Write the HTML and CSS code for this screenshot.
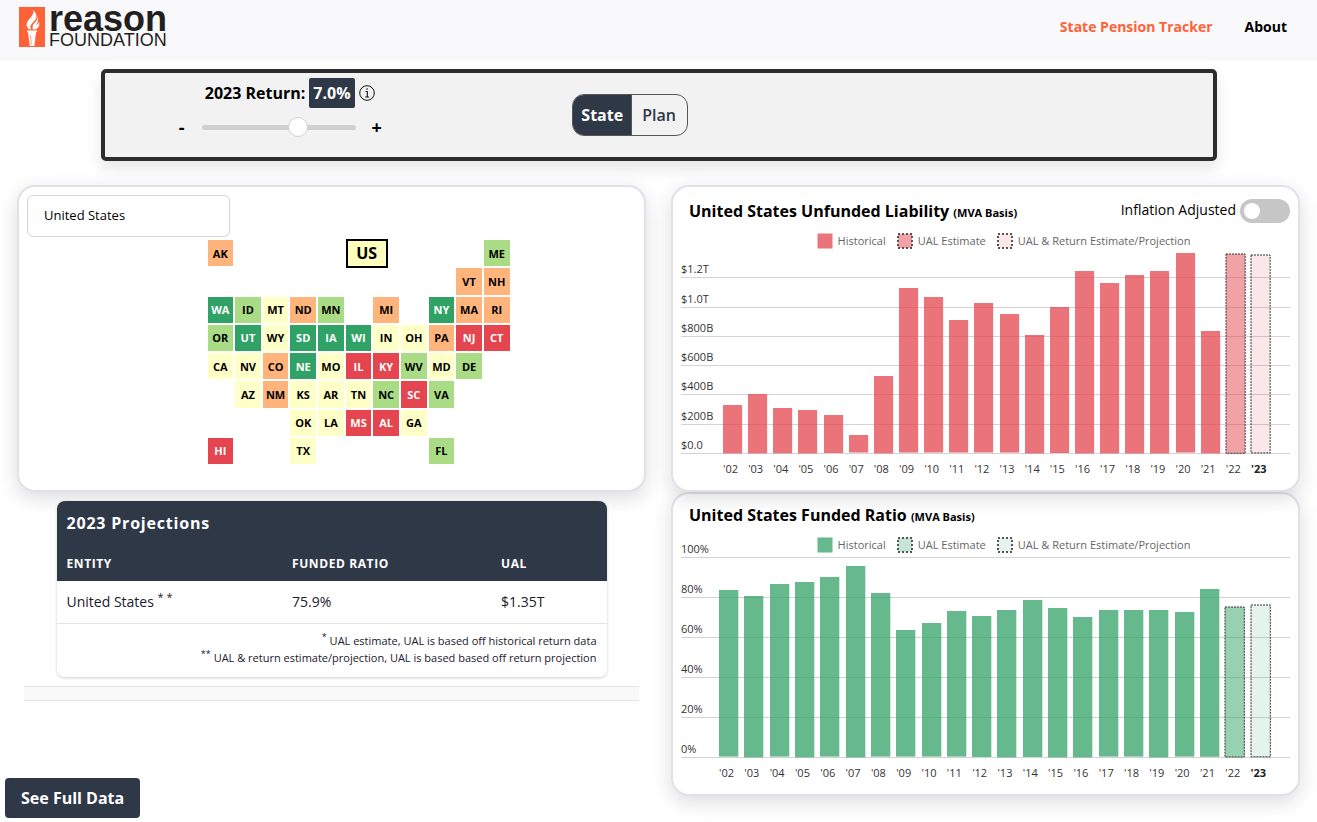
FILE: index.html
```html
<!DOCTYPE html>
<html lang="en">
<head>
<meta charset="utf-8">
<title>State Pension Tracker</title>
<link rel="stylesheet" href="styles.css">
</head>
<body>
<header class="site-header">
  <a class="logo" href="#" aria-label="Reason Foundation">
    <svg class="logo-mark" viewBox="0 0 26 40" aria-hidden="true">
      <rect width="26" height="40" fill="#ff6237"/>
      <path fill="#fff" d="M14 3c1.500 3-1.500 6.500-4 9.500-2.800 3.300-3.600 7 .2 9.800l2 .2c-1.300-1.600-1-3.600.4-5.400l3.900-4.600c2-2.500.8-6.700-2.500-9.500zM18.700 8.500c.7 3.200-1.300 5.500-3.200 7.500-1.900 2.100-2.500 4.400-1.500 6.500h2.200c3.300-1.200 4.900-4.300 3.800-7.600-.8 1.600-1.800 2.600-2.900 3.400 1.700-3 2.700-6.600 1.600-9.800z"/>
      <path fill="#fff" d="M8 23.500h10v1.800h-1L15.400 39h-4.600L9 25.300H8z"/>
      <path stroke="#ff6237" stroke-width=".6" d="M11.500 28l.8 10"/>
    </svg>
    <span class="logo-text"><span class="logo-name">reason</span><span class="logo-sub">FOUNDATION</span></span>
  </a>
  <nav class="site-nav">
    <a class="nav-link active" href="#">State Pension Tracker</a>
    <a class="nav-link" href="#">About</a>
  </nav>
</header>

<section class="controls">
  <div class="return-control">
    <div class="return-title">
      <label for="return">2023 Return:</label>
      <output class="return-value" for="return">7.0%</output>
      <svg class="info" viewBox="0 0 16 16" fill="none" stroke="#111" aria-hidden="true">
        <circle cx="8" cy="8" r="7.300"/>
        <path d="M6.500 6.500H8.300V12M6.300 12h3.800" stroke-width="1.100"/>
        <circle cx="8" cy="4" r=".8" fill="#111" stroke="none"/>
      </svg>
    </div>
    <div class="slider-row">
      <button class="step" type="button">-</button>
      <input class="slider" id="return" type="range" min="0" max="100" value="64">
      <button class="step" type="button">+</button>
    </div>
  </div>
  <div class="view-cell">
    <div class="view-toggle">
      <button class="view selected" type="button">State</button>
      <button class="view" type="button">Plan</button>
    </div>
  </div>
</section>

<main class="dashboard">
  <div class="column">
    <section class="card map-card">
      <select class="entity" aria-label="Entity"><option>United States</option></select>
      <div class="map-wrap"><div class="map" id="map"></div></div>
    </section>
    <div class="projections">
      <table class="table">
        <thead>
          <tr><th class="table-title" colspan="3">2023 Projections</th></tr>
          <tr class="heads"><th class="col-entity">Entity</th><th class="col-ratio">Funded Ratio</th><th>UAL</th></tr>
        </thead>
        <tbody>
          <tr><td>United States <sup>* *</sup></td><td>75.9%</td><td>$1.35T</td></tr>
        </tbody>
        <tfoot>
          <tr><td class="notes" colspan="3">
            <p><sup>*</sup> UAL estimate, UAL is based off historical return data</p>
            <p><sup>**</sup> UAL &amp; return estimate/projection, UAL is based based off return projection</p>
          </td></tr>
        </tfoot>
      </table>
    </div>
    <div class="divider"></div>
  </div>

  <div class="column">
    <section class="card chart-card liability">
      <div class="chart-head">
        <h2 class="chart-title">United States Unfunded Liability <small>(MVA Basis)</small></h2>
        <label class="switch-label"><span class="switch-text">Inflation Adjusted</span> <input class="switch" type="checkbox"></label>
      </div>
      <div class="chart" id="liability"></div>
    </section>
    <section class="card chart-card ratio">
      <div class="chart-head">
        <h2 class="chart-title">United States Funded Ratio <small>(MVA Basis)</small></h2>
      </div>
      <div class="chart" id="ratio"></div>
    </section>
  </div>
</main>

<button class="full-data" type="button">See Full Data</button>
<script src="app.js"></script>
</body>
</html>
```
FILE: styles.css
```css
* { box-sizing: border-box; }

body {
  margin: 0;
  background: #fff;
  color: #000;
  font-family: "Open Sans", "Noto Sans", sans-serif;
  font-size: 14px;
}

button, select { font: inherit; color: inherit; }

.site-header {
  display: flex;
  justify-content: space-between;
  align-items: flex-start;
  height: 61px;
  padding: 7px 30px 0 19px;
  background: #f9f9fb;
}

.logo { display: flex; gap: 4px; color: #231f20; text-decoration: none; }
.logo-mark { width: 26px; height: 40px; }
.logo-text { display: flex; flex-direction: column; font-family: "Liberation Sans", Arial, sans-serif; }
.logo-name { font-size: 36px; font-weight: 700; line-height: 23px; }
.logo-sub { font-size: 18px; line-height: 20px; }

.site-nav { display: flex; gap: 32px; padding-top: 10px; }
.nav-link { color: #000; font-weight: 700; line-height: 20px; text-decoration: none; }
.nav-link.active { color: #ff6237; }

.controls {
  display: grid;
  grid-template-columns: repeat(3, 1fr);
  height: 92px;
  margin: 8px 100px 24px 101px;
  border: 4px solid #2d2d2d;
  border-radius: 5px;
  background: #f2f2f2;
  box-shadow: 0 8px 16px rgba(0, 0, 0, .1);
}

.return-control { display: flex; flex-direction: column; align-items: center; padding-top: 5px; }
.return-title { display: flex; align-items: center; gap: 4px; font-size: 16px; font-weight: 700; }
.return-value { padding: 0 4px; border-radius: 2px; background: #2f3847; color: #fff; line-height: 30px; }
.info { width: 16px; height: 16px; }

.slider-row { display: flex; align-items: center; gap: 9px; padding: 4px 21px 0 0; }
.step { width: 23px; padding: 0; border: 0; background: none; font-size: 18px; font-weight: 700; line-height: 30px; }

.slider { -webkit-appearance: none; appearance: none; width: 154px; height: 20px; margin: 0; background: none; }
.slider::-webkit-slider-runnable-track { height: 5px; border-radius: 3px; background: #cfd0d2; }
.slider::-webkit-slider-thumb {
  -webkit-appearance: none;
  width: 20px;
  height: 20px;
  margin-top: -8px;
  border: 1px solid #d2d2d6;
  border-radius: 50%;
  background: #fff;
}

.view-cell { display: flex; align-items: center; padding-left: 98px; }
.view-toggle { display: flex; height: 42px; overflow: hidden; border: 1px solid #555; border-radius: 12px; }
.view { padding: 0 11px 0 10px; border: 0; background: none; color: #2f3847; font-size: 16px; font-weight: 600; }
.view.selected { padding: 0 8px; border-right: 1px solid #555; background: #2f3847; color: #fff; font-weight: 700; }

.dashboard {
  display: grid;
  grid-template-columns: minmax(0, 1fr) minmax(0, 1fr);
  gap: 25px;
  padding: 0 17px 26px;
}

.card {
  border: 2px solid #e1e1e9;
  border-radius: 18px;
  background: #fff;
  box-shadow: 0 6px 20px rgba(0, 0, 0, .14);
}

.map-card { padding: 8px 8px 26px; }
.entity {
  -webkit-appearance: none;
  appearance: none;
  display: block;
  width: 203px;
  height: 42px;
  padding: 0 16px 2px;
  border: 1px solid #d4d4d6;
  border-radius: 6px;
  background: #fff;
  font-size: 13px;
}
.map-wrap { display: flex; justify-content: center; padding: 3px 0 0 54px; }
.map {
  display: grid;
  grid-template-columns: repeat(11, minmax(0, 1fr));
  grid-template-rows: repeat(8, minmax(0, 1fr));
  gap: 2px;
  width: 302px;
  height: 224px;
}
.state { display: flex; align-items: center; justify-content: center; font-size: 11px; font-weight: 700; }
.state.dark-green { background: #31a266; color: #fff; }
.state.green { background: #a9dc84; }
.state.yellow { background: #ffffc8; }
.state.orange { background: #ffb47c; }
.state.red { background: #e4454f; color: #fff; }
.state.nation {
  align-self: center;
  width: 42px;
  height: 29px;
  border: 2px solid #000;
  background: #ffffbe;
  font-size: 16px;
}

.projections {
  position: relative;
  max-width: 550px;
  margin: 9px auto;
  overflow: hidden;
  border-radius: 8px;
  box-shadow: 0 1px 3px rgba(0, 0, 0, .2);
}
.table { width: 100%; border-collapse: collapse; background: #fff; color: #1a202c; }
.table th, .table td { padding: 0 10px; text-align: left; }
.table thead { background: #2f3847; color: #fff; }
.table .table-title { height: 44px; font-size: 16px; letter-spacing: .05em; }
.heads th { height: 36px; font-size: 12px; letter-spacing: .05em; text-transform: uppercase; }
.col-entity { width: 41%; }
.col-ratio { width: 38%; }
.table tbody td { height: 42px; border-bottom: 1px solid #e2e2e8; }
.table sup { font-size: 11px; line-height: 0; }
.table .notes { padding: 8px 10px 11px; font-size: 11px; line-height: 17px; text-align: right; }
.notes p { margin: 0; }
.table .notes sup { font-size: 9px; }
.divider { height: 15px; margin: 0 7px; border: solid #e4e4e6; border-width: 1px 0; background: #f9f9f9; }

.liability { position: relative; z-index: 1; }
.chart-card { padding: 12px 8px 13px; }
.chart-card.ratio { padding-top: 9px; }
.chart-head { display: flex; align-items: center; justify-content: space-between; height: 24px; padding-left: 8px; }
.chart-title { margin: 0; padding-top: 2px; font-size: 16px; line-height: 24px; }
.chart-title small { font-size: 11px; }
.switch-label { display: flex; align-items: center; gap: 4px; line-height: 20px; }
.switch-text { padding-bottom: 3px; }
.switch { -webkit-appearance: none; appearance: none; width: 50px; height: 24px; margin: 0; padding: 4px; border-radius: 12px; background: #c6c6c6; }
.switch::before { content: ""; display: block; width: 16px; height: 16px; border-radius: 50%; background: #fff; }

.legend { display: flex; justify-content: center; gap: 11px; margin: 10px 0 4px; padding-left: 36px; color: #666; font-size: 11px; line-height: 16px; }
.legend-item { display: flex; align-items: center; gap: 5px; }
.swatch { width: 16px; height: 16px; }
.swatch rect { stroke: #555; stroke-width: 2px; stroke-dasharray: 2 2; }
.swatch .historical { stroke: none; }

.plot { position: relative; height: 200px; }
.grid-line {
  position: absolute;
  left: 0;
  right: 0;
  margin-bottom: -1px;
  border-bottom: 1px solid #d3d3d3;
  color: #333;
  font-size: 11px;
  line-height: 16px;
}
.bars, .years { display: flex; gap: 6px; padding: 0 20px 0 38px; }
.liability .bars, .liability .years { padding-left: 42px; }
.bars { position: relative; align-items: flex-end; height: 200px; }
.bar { flex: 1 1 0; width: 0; overflow: visible; }
.years { margin-top: 8px; color: #333; font-size: 11px; line-height: 16px; }
.year { flex: 1 1 0; min-width: 0; }
.year:last-child { color: #222; font-weight: 700; }

.red-series { fill: #e4454f; }
.green-series { fill: #31a266; }
.historical { fill-opacity: .75; }
.estimate { fill-opacity: .5; }
.projection { fill-opacity: .13; }
.swatch .green-series.estimate { fill-opacity: .28; }
.bar .estimate, .bar .projection { stroke: #333; stroke-width: 1px; stroke-dasharray: 2 1; }

.full-data {
  position: fixed;
  left: 5px;
  bottom: 4px;
  height: 40px;
  padding: 0 16px;
  border: 0;
  border-radius: 4px;
  background: #2f3847;
  color: #fff;
  font-size: 16px;
  font-weight: 700;
}
```
FILE: app.js
```js
const groups = {
  'dark-green': 'WA:3,1 UT:4,2 SD:4,4 IA:4,5 WI:4,6 NE:5,4 NY:3,9',
  green: 'ME:1,11 ID:3,2 MN:3,5 OR:4,1 WV:5,8 DE:5,10 NC:6,7 VA:6,9 FL:8,9',
  yellow: 'MT:3,3 WY:4,3 IN:4,7 OH:4,8 CA:5,1 NV:5,2 MO:5,5 MD:5,9 AZ:6,2 KS:6,4 AR:6,5 TN:6,6 OK:7,4 LA:7,5 GA:7,8 TX:8,4',
  orange: 'AK:1,1 VT:2,10 NH:2,11 ND:3,4 MI:3,7 MA:3,10 RI:3,11 PA:4,9 CO:5,3 NM:6,3',
  red: 'NJ:4,10 CT:4,11 IL:5,6 KY:5,7 SC:6,8 MS:7,6 AL:7,7 HI:8,1',
  nation: 'US:1,6'
};
let tiles = '';
for (const [name, list] of Object.entries(groups)) {
  for (const item of list.split(' ')) {
    const [code, place] = item.split(':');
    const [row, col] = place.split(',');
    tiles += `<div class="state ${name}" style="grid-row:${row};grid-column:${col}">${code}</div>`;
  }
}
document.getElementById('map').innerHTML = tiles;

const kinds = [['historical', 'Historical'], ['estimate', 'UAL Estimate'], ['projection', 'UAL &amp; Return Estimate/Projection']];

function drawChart(id, color, values, max, ticks) {
  const legend = kinds.map(([kind, text]) => {
    const inset = kind === 'historical' ? 0.5 : 1;
    const size = 16 - inset * 2;
    return `<span class="legend-item"><svg class="swatch" viewBox="0 0 16 16"><rect class="${color} ${kind}" x="${inset}" y="${inset}" width="${size}" height="${size}"/></svg>${text}</span>`;
  }).join('');
  const lines = ticks.map(([value, text]) =>
    `<div class="grid-line" style="bottom:${value / max * 100}%">${text}</div>`).join('');
  const bars = values.map((value, i) => {
    const kind = i < 20 ? 'historical' : i === 20 ? 'estimate' : 'projection';
    return `<svg class="bar" style="height:${value / max * 100}%"><rect class="${color} ${kind}" width="100%" height="100%"/></svg>`;
  }).join('');
  const years = values.map((_, i) => `<span class="year">'${String(i + 2).padStart(2, '0')}</span>`).join('');
  document.getElementById(id).innerHTML =
    `<div class="legend">${legend}</div><div class="plot">${lines}<div class="bars">${bars}</div></div><div class="years">${years}</div>`;
}

drawChart('liability', 'red-series',
  [331, 406, 310, 297, 260, 120, 529, 1125, 1063, 906, 1022, 947, 810, 998, 1247, 1165, 1220, 1247, 1364, 837, 1362, 1353],
  1367,
  [[0, '$0.0'], [200, '$200B'], [400, '$400B'], [600, '$600B'], [800, '$800B'], [1000, '$1.0T'], [1200, '$1.2T']]);

drawChart('ratio', 'green-series',
  [83.3, 80.7, 86.3, 87.7, 89.8, 95.7, 81.8, 63.3, 66.8, 72.8, 70.5, 73.7, 78.5, 74.7, 70.2, 73.3, 73.3, 73.7, 72.3, 83.9, 75, 75.9],
  100,
  [[0, '0%'], [20, '20%'], [40, '40%'], [60, '60%'], [80, '80%'], [100, '100%']]);
```
